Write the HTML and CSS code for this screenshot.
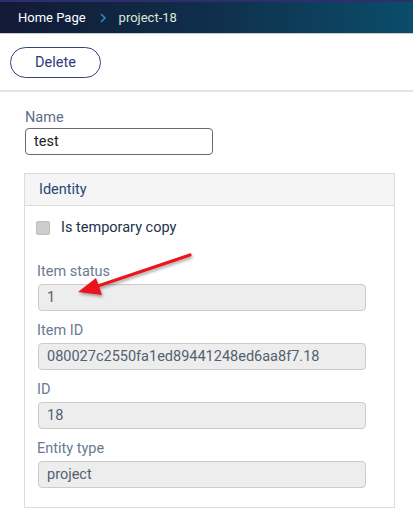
FILE: index.html
```html
<!DOCTYPE html>
<html>
<head>
<meta charset="utf-8">
<link rel="stylesheet" href="styles.css">
</head>
<body>
<header class="topbar">
  <span class="crumb-home">Home Page</span>
  <svg class="crumb-sep" width="8" height="12" viewBox="0 0 8 12"><path d="M2 2 L6 6 L2 10" fill="none" stroke="#1f8fc0" stroke-width="1.6"/></svg>
  <span class="crumb-current">project-18</span>
</header>
<div class="toolbar">
  <button class="btn-delete">Delete</button>
</div>
<main class="content">
  <div class="field name-field">
    <label class="label">Name</label>
    <div class="input editable">test</div>
  </div>
  <section class="panel">
    <div class="panel-head">Identity</div>
    <div class="panel-body">
      <div class="check-row">
        <span class="checkbox"></span>
        <span class="check-label">Is temporary copy</span>
      </div>
      <div class="field ro">
        <label class="label">Item status</label>
        <div class="input readonly">1</div>
      </div>
      <div class="field ro">
        <label class="label">Item ID</label>
        <div class="input readonly">080027c2550fa1ed89441248ed6aa8f7.18</div>
      </div>
      <div class="field ro">
        <label class="label">ID</label>
        <div class="input readonly">18</div>
      </div>
      <div class="field ro">
        <label class="label">Entity type</label>
        <div class="input readonly">project</div>
      </div>
    </div>
  </section>
</main>
<svg class="arrow" width="140" height="60" viewBox="0 0 140 60">
  <defs>
    <filter id="sh" x="-20%" y="-40%" width="140%" height="180%">
      <feDropShadow dx="1" dy="2" stdDeviation="1.5" flood-color="#000" flood-opacity="0.35"/>
    </filter>
  </defs>
  <g filter="url(#sh)">
    <line x1="120" y1="5" x2="22" y2="38" stroke="#e8141b" stroke-width="3.2" stroke-linecap="round"/>
    <path d="M8 42 L26 28 L32 45 Z" fill="#e8141b"/>
  </g>
</svg>
</body>
</html>
```
FILE: styles.css
```css
* { box-sizing: border-box; }
html, body { margin: 0; padding: 0; background: #fff; }
body {
  font-family: Roboto, "Noto Sans", Arial, sans-serif;
  font-size: 14.5px;
  position: relative;
  width: 413px;
  height: 520px;
  overflow: hidden;
}
.topbar {
  height: 34px;
  border-top: 2px solid #2c2f6c;
  background: linear-gradient(90deg, #121a36 0%, #0f2e4a 50%, #0b4d6b 100%);
  display: flex;
  align-items: center;
  padding-left: 18px;
  font-size: 13px;
  border-bottom: 1px solid #c8ccd0;
}
.crumb-home { color: #fff; }
.crumb-sep { margin: 0 12px 0 13px; }
.crumb-current { color: #dfe6d6; }
.toolbar {
  padding: 13px 10px 12px;
  border-bottom: 2px solid #e2e2e2;
}
.btn-delete {
  width: 91px;
  height: 31px;
  border: 1.5px solid #3b3f7c;
  border-radius: 16px;
  background: #fff;
  color: #2f3a7a;
  font-family: inherit;
  font-size: 14.5px;
  padding: 0;
}
.content { padding: 17px 19px 0 24px; }
.field { display: flex; flex-direction: column; }
.label {
  color: #5d6e86;
  line-height: 18px;
  margin-bottom: 1px;
}
.name-field { padding-left: 1px; }
.input {
  height: 27px;
  border-radius: 4px;
  display: flex;
  align-items: center;
  padding-left: 8px;
}
.editable {
  width: 188px;
  border: 1px solid #6a6a6a;
  color: #222;
}
.panel {
  margin-top: 18px;
  border: 1px solid #dcdcdc;
  width: 371px;
}
.panel-head {
  height: 32px;
  background: #f5f5f5;
  border-bottom: 1px solid #dcdcdc;
  color: #1f4777;
  display: flex;
  align-items: center;
  padding-left: 14px;
}
.panel-body { padding: 13px 0 19px 11px; }
.check-row { display: flex; align-items: center; height: 17px; margin-bottom: 27px; }
.checkbox {
  width: 14px; height: 14px;
  background: #cdcdcd;
  border: 1px solid #bdbdbd;
  border-radius: 2px;
  margin-right: 11px;
}
.check-label { color: #22324a; }
.ro { padding-left: 1px; margin-bottom: 11px; }
.ro:last-child { margin-bottom: 0; }
.ro .label { margin-bottom: 3px; color: #6a7a92; }
.readonly {
  width: 328px;
  margin-left: 1px;
  background: #ededed;
  border: 1px solid #cbcbcb;
  color: #556070;
}
.arrow {
  position: absolute;
  left: 70px;
  top: 250px;
}
```
